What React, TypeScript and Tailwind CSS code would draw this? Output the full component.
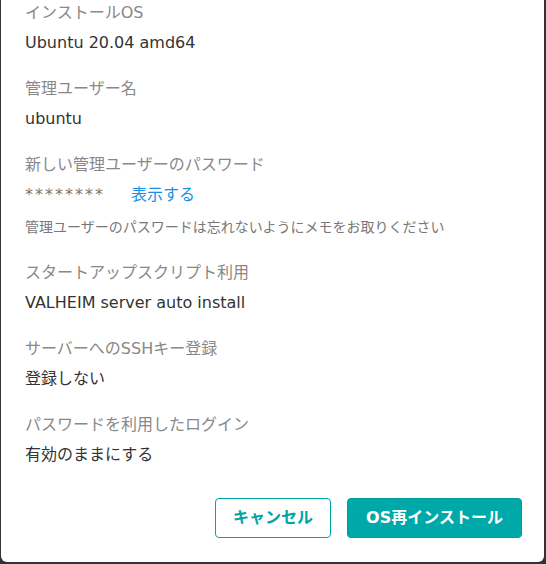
const font = { fontFamily: '"DejaVu Sans", "Noto Sans CJK JP", sans-serif' };

type Item = { label: string; value: string };

const items: Item[] = [
  { label: 'インストールOS', value: 'Ubuntu 20.04 amd64' },
  { label: '管理ユーザー名', value: 'ubuntu' },
];

const rest: Item[] = [
  { label: 'スタートアップスクリプト利用', value: 'VALHEIM server auto install' },
  { label: 'サーバーへのSSHキー登録', value: '登録しない' },
  { label: 'パスワードを利用したログイン', value: '有効のままにする' },
];

function Field({ label, value }: Item) {
  return (
    <div>
      <div className="text-[16px] leading-[24px] text-[#888]">{label}</div>
      <div className="mt-[6px] text-[16px] leading-[24px] text-[#333]">{value}</div>
    </div>
  );
}

export default function App() {
  return (
    <div className="h-[564px] w-[546px] overflow-hidden bg-[#333] pb-[2px] pl-[1px] pr-[2px]" style={font}>
      <div className="flex h-full flex-col overflow-hidden rounded-b-[6px] bg-white pl-[24px] pr-[22px] pt-[1px]">
        <div className="flex flex-col gap-[22px]">
          {items.map((item) => (
            <Field key={item.label} {...item} />
          ))}
        </div>

        <div className="mt-[22px]">
          <div className="text-[16px] leading-[24px] text-[#888]">新しい管理ユーザーのパスワード</div>
          <div className="mt-[6px] flex items-center text-[16px] leading-[24px]">
            <span className="w-[106px] tracking-[2px] text-[#777]">********</span>
            <button className="text-[#1a8fe6]">表示する</button>
          </div>
          <p className="mt-[10px] text-[14px] leading-[20px] text-[#777]">
            管理ユーザーのパスワードは忘れないようにメモをお取りください
          </p>
        </div>

        <div className="mt-[24px] flex flex-col gap-[22px]">
          {rest.map((item) => (
            <Field key={item.label} {...item} />
          ))}
        </div>

        <div className="mt-[31px] flex justify-end gap-[16px]">
          <button className="h-[40px] w-[116px] rounded-[4px] border border-[#00a8a8] bg-white text-[16px] font-bold text-[#00a4a4]">
            キャンセル
          </button>
          <button className="h-[40px] w-[175px] rounded-[4px] border border-[#009a9a] bg-[#00a9a9] text-[16px] font-bold text-white">
            OS再インストール
          </button>
        </div>
      </div>
    </div>
  );
}
